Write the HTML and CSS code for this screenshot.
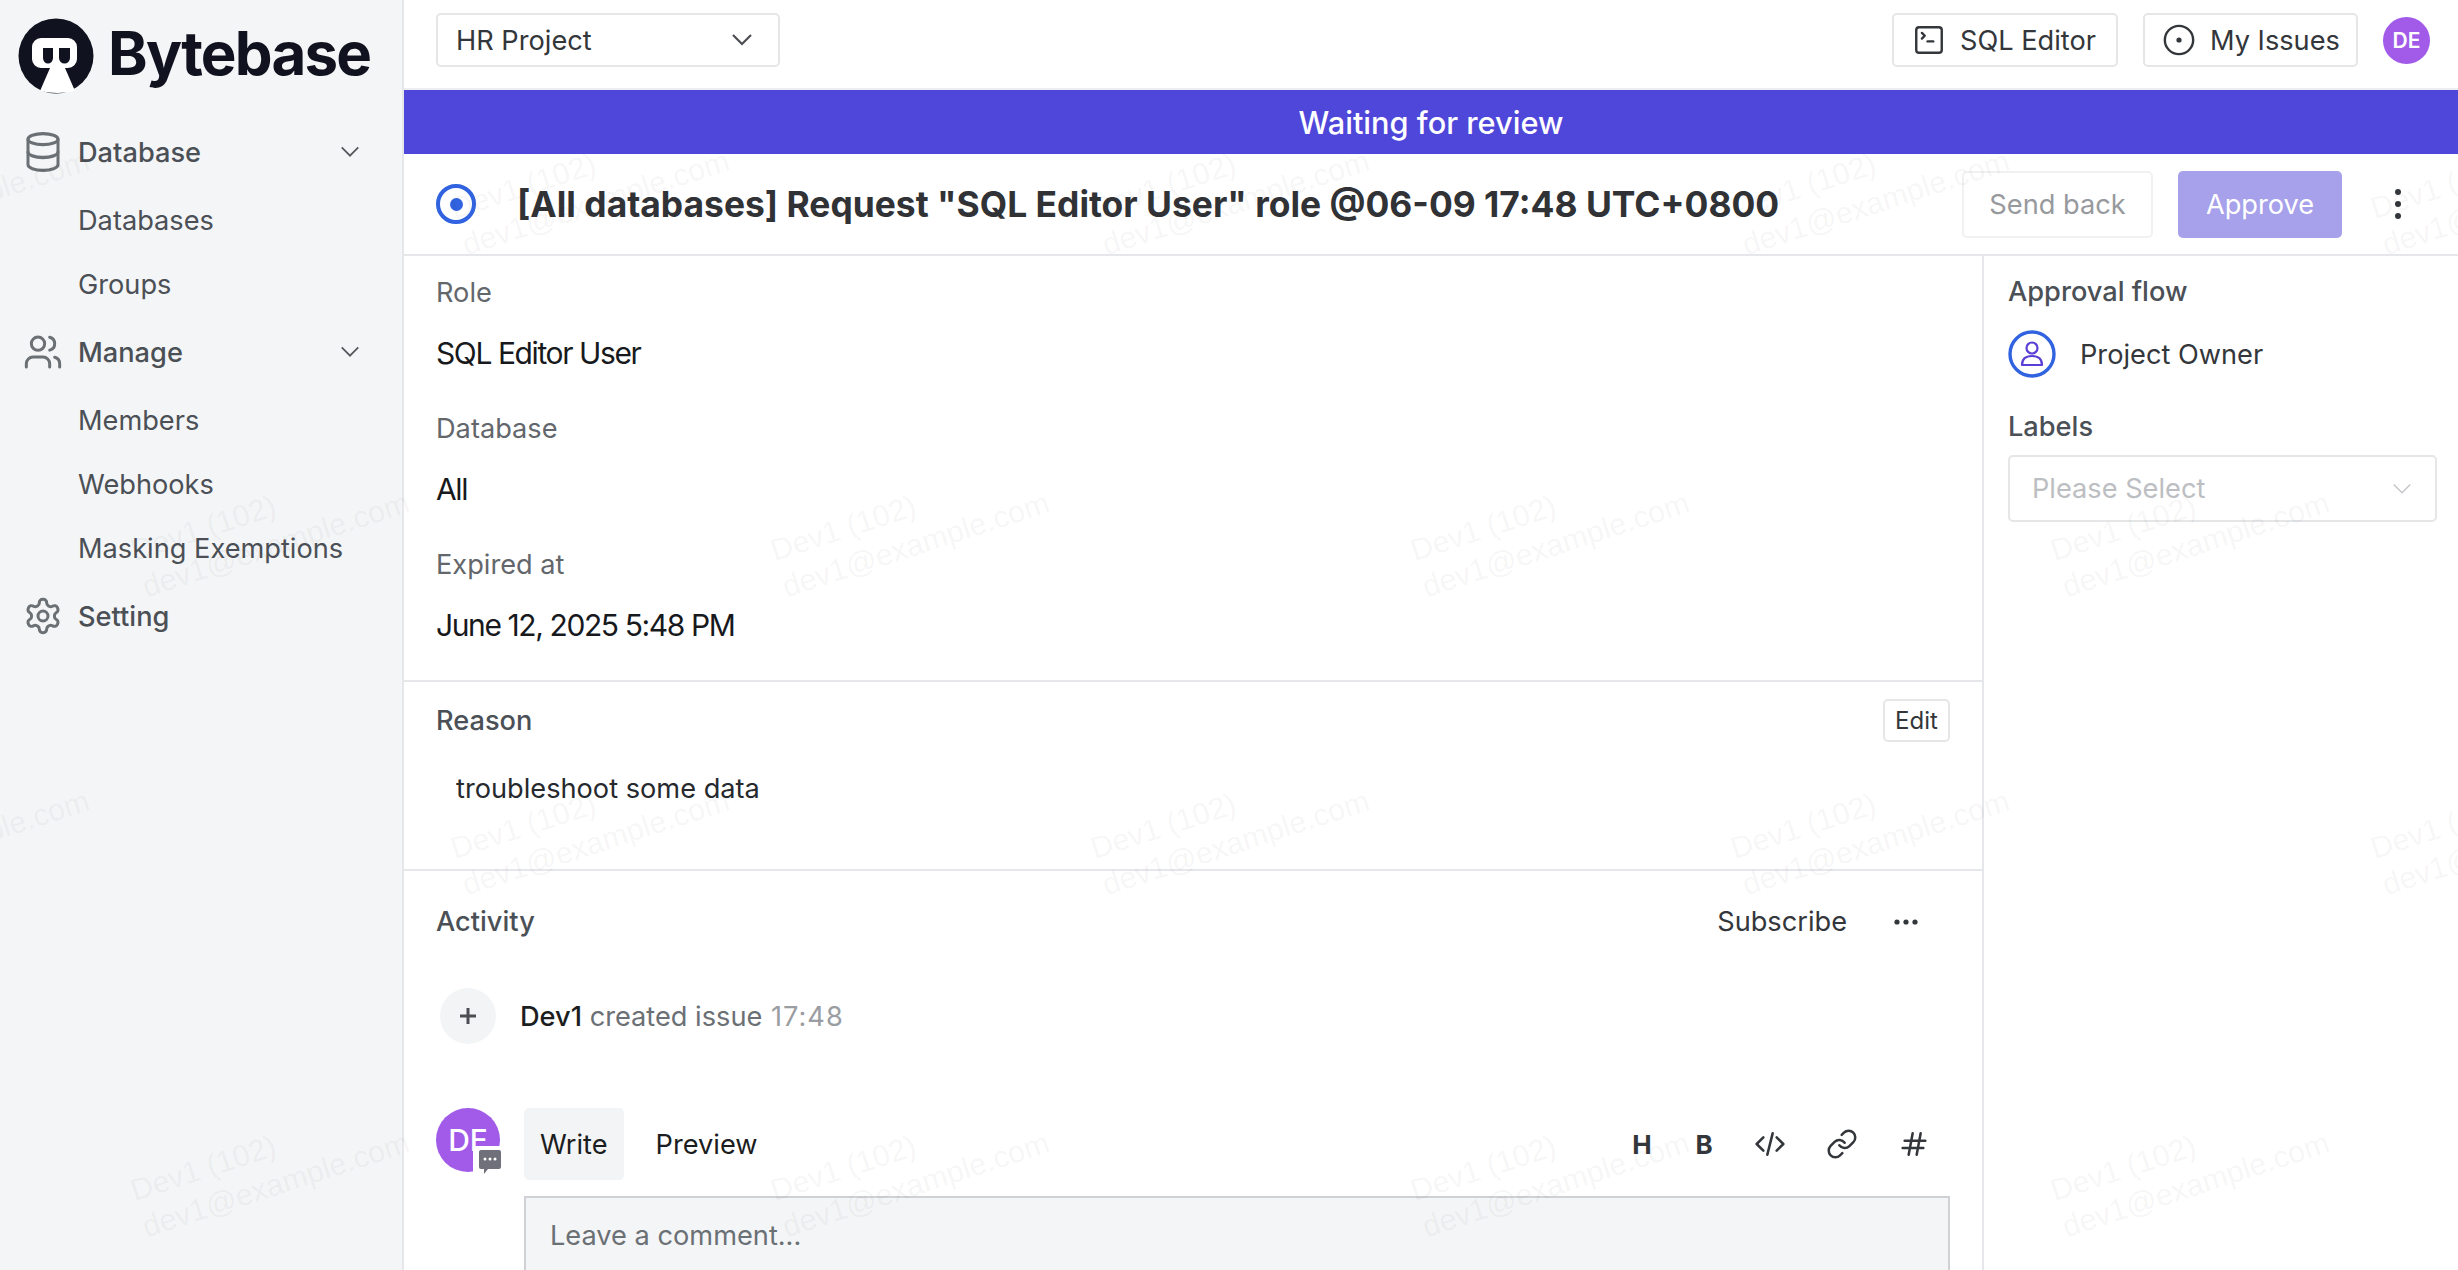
FILE: index.html
```html
<!DOCTYPE html>
<html lang="en">
<head>
<meta charset="utf-8">
<title>Bytebase</title>
<link rel="stylesheet" href="styles.css">
</head>
<body>
<div class="app">
  <aside class="side">
    <div class="brand">
      <svg class="logo" viewBox="0 0 76 76">
        <circle cx="38" cy="38" r="37.5" fill="#10131f"/>
        <path d="M23 20h27a9 9 0 0 1 9 9v12a9 9 0 0 1-9 9h-3l10 23q-18 4-35 0l10-23h-9a9 9 0 0 1-9-9V29a9 9 0 0 1 9-9z" fill="#fff"/>
        <path d="M25 30h10v10a5 5.500 0 0 1-10 0zM41 30h11v10a5.500 5.500 0 0 1-11 0z" fill="#10131f"/>
      </svg>
      <span class="brand-name">Bytebase</span>
    </div>
    <nav class="nav">
      <div class="nav-item nav-top">
        <svg class="nav-icon" viewBox="0 0 24 24" preserveAspectRatio="none"><ellipse cx="12" cy="5" rx="9" ry="3"/><path d="M3 5v14a9 3 0 0 0 18 0V5"/><path d="M3 12a9 3 0 0 0 18 0"/></svg>
        <span class="nav-label">Database</span>
        <svg class="nav-chev" viewBox="0 0 24 24"><path d="m3 7 9 9 9-9"/></svg>
      </div>
      <div class="nav-item nav-sub">Databases</div>
      <div class="nav-item nav-sub">Groups</div>
      <div class="nav-item nav-top">
        <svg class="nav-icon" viewBox="0 0 24 24"><path d="M16 21v-2a4 4 0 0 0-4-4H6a4 4 0 0 0-4 4v2"/><circle cx="9" cy="7" r="4"/><path d="M22 21v-2a4 4 0 0 0-3-3.870"/><path d="M16 3.130a4 4 0 0 1 0 7.750"/></svg>
        <span class="nav-label">Manage</span>
        <svg class="nav-chev" viewBox="0 0 24 24"><path d="m3 7 9 9 9-9"/></svg>
      </div>
      <div class="nav-item nav-sub">Members</div>
      <div class="nav-item nav-sub">Webhooks</div>
      <div class="nav-item nav-sub">Masking Exemptions</div>
      <div class="nav-item nav-top">
        <svg class="nav-icon" viewBox="0 0 24 24"><path d="M12.220 2h-.44a2 2 0 0 0-2 2v.18a2 2 0 0 1-1 1.730l-.43.25a2 2 0 0 1-2 0l-.15-.08a2 2 0 0 0-2.730.73l-.22.38a2 2 0 0 0 .73 2.730l.15.1a2 2 0 0 1 1 1.720v.51a2 2 0 0 1-1 1.740l-.15.09a2 2 0 0 0-.73 2.730l.22.38a2 2 0 0 0 2.730.73l.15-.08a2 2 0 0 1 2 0l.43.25a2 2 0 0 1 1 1.730V20a2 2 0 0 0 2 2h.44a2 2 0 0 0 2-2v-.18a2 2 0 0 1 1-1.730l.43-.25a2 2 0 0 1 2 0l.15.08a2 2 0 0 0 2.730-.73l.22-.39a2 2 0 0 0-.73-2.730l-.15-.08a2 2 0 0 1-1-1.740v-.5a2 2 0 0 1 1-1.740l.15-.09a2 2 0 0 0 .73-2.730l-.22-.38a2 2 0 0 0-2.730-.73l-.15.08a2 2 0 0 1-2 0l-.43-.25a2 2 0 0 1-1-1.730V4a2 2 0 0 0-2-2z"/><circle cx="12" cy="12" r="3"/></svg>
        <span class="nav-label">Setting</span>
      </div>
    </nav>
  </aside>

  <div class="main">
    <header class="topbar">
      <div class="project-select">
        <span>HR Project</span>
        <svg class="select-chev" viewBox="0 0 24 24"><path d="m3 7 9 9 9-9"/></svg>
      </div>
      <div class="top-actions">
        <div class="top-btn top-btn-sql">
          <svg class="top-icon" viewBox="0 0 24 24"><rect x="3" y="3" width="18" height="18" rx="2"/><path d="m7 11 2-2-2-2"/><path d="M11 13h4"/></svg>
          <span>SQL Editor</span>
        </div>
        <div class="top-btn top-btn-issues">
          <svg class="top-icon" viewBox="0 0 24 24"><circle cx="12" cy="12" r="10"/><circle cx="12" cy="12" r="1" fill="currentColor"/></svg>
          <span>My Issues</span>
        </div>
        <div class="avatar-small">DE</div>
      </div>
    </header>

    <div class="banner">Waiting for review</div>

    <div class="title-row">
      <span class="status-ring"><span class="status-dot"></span></span>
      <h1 class="issue-title">[All databases] Request "SQL Editor User" role @06-09 17:48 UTC+0800</h1>
      <div class="btn btn-back">Send back</div>
      <div class="btn btn-approve">Approve</div>
      <svg class="kebab" viewBox="0 0 10 40"><circle cx="5" cy="8" r="3"/><circle cx="5" cy="20" r="3"/><circle cx="5" cy="32" r="3"/></svg>
    </div>

    <div class="body">
      <section class="content">
        <div class="fields">
          <div class="field-label">Role</div>
          <div class="field-value">SQL Editor User</div>
          <div class="field-label">Database</div>
          <div class="field-value">All</div>
          <div class="field-label">Expired at</div>
          <div class="field-value">June 12, 2025 5:48 PM</div>
        </div>
        <div class="reason">
          <div class="section-head">
            <span class="section-title">Reason</span>
            <span class="edit-btn">Edit</span>
          </div>
          <div class="reason-text">troubleshoot some data</div>
        </div>
        <div class="activity">
          <div class="section-head activity-head">
            <span class="section-title">Activity</span>
            <div class="activity-tools">
              <span class="subscribe">Subscribe</span>
              <svg class="more" viewBox="0 0 24 6"><circle cx="3" cy="3" r="2.600"/><circle cx="12" cy="3" r="2.600"/><circle cx="21" cy="3" r="2.600"/></svg>
            </div>
          </div>
          <div class="event">
            <span class="event-icon"><svg viewBox="0 0 24 24"><path d="M12 4v16M4 12h16"/></svg></span>
            <span class="event-text"><b>Dev1</b> created issue <i>17:48</i></span>
          </div>
          <div class="composer">
            <div class="composer-avatar">
              <div class="avatar-big">DE</div>
              <span class="chat-badge"><svg viewBox="0 0 22 24"><path d="M2 0h18a2 2 0 0 1 2 2v15a2 2 0 0 1-2 2H9l-4 5v-5H2a2 2 0 0 1-2-2V2a2 2 0 0 1 2-2z" fill="#6f7079"/><circle cx="6" cy="9" r="1.500" fill="#fff"/><circle cx="11" cy="9" r="1.500" fill="#fff"/><circle cx="16" cy="9" r="1.500" fill="#fff"/></svg></span>
            </div>
            <div class="composer-main">
              <div class="composer-tabs">
                <span class="tab tab-on">Write</span>
                <span class="tab">Preview</span>
                <div class="md-tools">
                  <span class="md-glyph">H</span>
                  <span class="md-glyph">B</span>
                  <svg class="md-icon md-code" viewBox="0 0 24 24"><path d="m7 7-5 5 5 5M17 7l5 5-5 5M14 4l-4 16"/></svg>
                  <svg class="md-icon" viewBox="0 0 24 24"><path d="M10 13a5 5 0 0 0 7.540.54l3-3a5 5 0 0 0-7.070-7.070l-1.720 1.710"/><path d="M14 11a5 5 0 0 0-7.540-.54l-3 3a5 5 0 0 0 7.070 7.070l1.710-1.710"/></svg>
                  <svg class="md-icon" viewBox="0 0 24 24"><path d="M5 9.500h15.500M3.500 15h15.500M11 4 8 20M17 4l-3 16"/></svg>
                </div>
              </div>
              <div class="comment-box">Leave a comment...</div>
            </div>
          </div>
        </div>
      </section>
      <aside class="panel">
        <div class="panel-title">Approval flow</div>
        <div class="flow">
          <svg class="flow-icon" viewBox="0 0 48 48">
            <circle cx="24" cy="24" r="22" fill="none" stroke="#3163e0" stroke-width="3.400"/>
            <circle cx="24" cy="18" r="5.500" fill="none" stroke="#5b3fd6" stroke-width="2.200"/>
            <path d="M14 35c0-6 4-9 10-9s10 3 10 9z" fill="none" stroke="#5b3fd6" stroke-width="2.200" stroke-linejoin="round"/>
          </svg>
          <span>Project Owner</span>
        </div>
        <div class="panel-title panel-title-labels">Labels</div>
        <div class="labels-select">
          <span>Please Select</span>
          <svg class="labels-chev" viewBox="0 0 24 24"><path d="m3 7 9 9 9-9"/></svg>
        </div>
      </aside>
    </div>
  </div>
</div>

<div class="marks" aria-hidden="true">
  <div class="mark-row mark-row-a">
    <div class="mark"><div class="mark-text">Dev1 (102)<br>dev1@example.com</div></div>
    <div class="mark"><div class="mark-text">Dev1 (102)<br>dev1@example.com</div></div>
    <div class="mark"><div class="mark-text">Dev1 (102)<br>dev1@example.com</div></div>
    <div class="mark"><div class="mark-text">Dev1 (102)<br>dev1@example.com</div></div>
    <div class="mark"><div class="mark-text">Dev1 (102)<br>dev1@example.com</div></div>
  </div>
  <div class="mark-row mark-row-b">
    <div class="mark"><div class="mark-text">Dev1 (102)<br>dev1@example.com</div></div>
    <div class="mark"><div class="mark-text">Dev1 (102)<br>dev1@example.com</div></div>
    <div class="mark"><div class="mark-text">Dev1 (102)<br>dev1@example.com</div></div>
    <div class="mark"><div class="mark-text">Dev1 (102)<br>dev1@example.com</div></div>
  </div>
  <div class="mark-row mark-row-a">
    <div class="mark"><div class="mark-text">Dev1 (102)<br>dev1@example.com</div></div>
    <div class="mark"><div class="mark-text">Dev1 (102)<br>dev1@example.com</div></div>
    <div class="mark"><div class="mark-text">Dev1 (102)<br>dev1@example.com</div></div>
    <div class="mark"><div class="mark-text">Dev1 (102)<br>dev1@example.com</div></div>
    <div class="mark"><div class="mark-text">Dev1 (102)<br>dev1@example.com</div></div>
  </div>
  <div class="mark-row mark-row-b">
    <div class="mark"><div class="mark-text">Dev1 (102)<br>dev1@example.com</div></div>
    <div class="mark"><div class="mark-text">Dev1 (102)<br>dev1@example.com</div></div>
    <div class="mark"><div class="mark-text">Dev1 (102)<br>dev1@example.com</div></div>
    <div class="mark"><div class="mark-text">Dev1 (102)<br>dev1@example.com</div></div>
  </div>
</div>
</body>
</html>
```
FILE: styles.css
```css
* { box-sizing: border-box; }
html, body { margin: 0; height: 100%; overflow: hidden; }
body { font-family: Inter, "Liberation Sans", sans-serif; font-size: 27.2px; color: #1f2328; background: #fff; position: relative; }

svg { display: block; flex: none; }

.app { display: flex; height: 100vh; }

/* sidebar */
.side { width: 404px; flex: none; background: #f4f5f7; border-right: 2px solid #e5e7eb; }
.brand { height: 120px; display: flex; align-items: flex-start; padding: 18px 0 0 18px; gap: 14px; }
.logo { width: 76px; height: 76px; }
.brand-name { font-size: 60px; font-weight: 700; letter-spacing: -1.800px; line-height: 70px; color: #10131f; }
.nav { display: flex; flex-direction: column; }
.nav-item { height: 64px; display: flex; align-items: center; color: #4b5056; }
.nav-top { font-weight: 500; padding-left: 23px; margin: 4px 0; }
.nav-top:first-child { margin-top: 0; }
.nav-sub { padding-left: 78px; }
.nav-icon { width: 40px; height: 44px; fill: none; stroke: #6b7075; stroke-width: 1.8; stroke-linecap: round; stroke-linejoin: round; margin-right: 15px; }
.nav-label { flex: 1; }
.nav-chev { width: 22px; height: 22px; fill: none; stroke: #55595f; stroke-width: 2; margin-right: 41px; }

/* top bar */
.main { flex: 1; min-width: 0; display: flex; flex-direction: column; }
.topbar { height: 90px; display: flex; align-items: center; justify-content: space-between; padding: 0 28px 8px 32px; border-bottom: 2px solid #eceef1; }
.project-select { width: 344px; height: 54px; border: 2px solid #e5e6e8; border-radius: 5px; display: flex; align-items: center; justify-content: space-between; padding: 0 24px 0 18px; color: #33363a; }
.select-chev { width: 24px; height: 24px; fill: none; stroke: #4b4e53; stroke-width: 2.200; }
.top-actions { display: flex; align-items: center; gap: 25px; }
.top-btn { height: 54px; border: 2px solid #e5e6e8; border-radius: 5px; display: flex; align-items: center; padding: 0 0 0 18px; gap: 14px; color: #33363a; white-space: nowrap; }
.top-btn-sql { width: 226px; }
.top-btn-issues { width: 215px; padding-left: 17px; }
.top-icon { width: 34px; height: 34px; fill: none; stroke: #33363a; stroke-width: 1.700; stroke-linecap: round; stroke-linejoin: round; }
.avatar-small { width: 47px; height: 47px; border-radius: 50%; background: #a15be8; color: #fff; font-size: 21px; font-weight: 600; display: flex; align-items: center; justify-content: center; }

/* banner */
.banner { height: 64px; background: #4f46da; color: #fff; font-size: 30.720px; font-weight: 500; display: flex; align-items: center; justify-content: center; }

/* title */
.title-row { height: 102px; display: flex; align-items: center; padding: 0 0 0 32px; border-bottom: 2px solid #e5e7eb; }
.status-ring { width: 40px; height: 40px; border: 4px solid #3163e0; border-radius: 50%; display: flex; align-items: center; justify-content: center; flex: none; margin-right: 41px; }
.status-dot { width: 13px; height: 13px; border-radius: 50%; background: #3163e0; }
.issue-title { margin: 0; flex: 1; font-size: 35.400px; font-weight: 700; color: #303236; white-space: nowrap; }
.btn { height: 67px; border-radius: 5px; display: flex; align-items: center; justify-content: center; flex: none; }
.btn-back { width: 191px; border: 2px solid #f0f1f3; color: #97999d; margin-right: 25px; }
.btn-approve { width: 164px; background: #a6a1ea; color: #fff; margin-right: 51px; }
.kebab { width: 10px; height: 40px; fill: #33363a; margin-right: 55px; }

/* body */
.body { flex: 1; min-height: 0; display: flex; }
.content { width: 1580px; flex: none; border-right: 2px solid #e5e7eb; }
.fields { height: 426px; padding: 12px 0 0 32px; border-bottom: 2px solid #e5e7eb; }
.field-label { height: 50px; line-height: 50px; color: #63676c; }
.field-value { height: 86px; padding-top: 10px; line-height: 50px; font-size: 30px; color: #17191c; letter-spacing: -1.400px; }
.reason { height: 189px; border-bottom: 2px solid #e5e7eb; }
.section-head { display: flex; align-items: center; justify-content: space-between; padding: 17px 32px 0 32px; }
.section-title { font-weight: 500; color: #4b5056; }
.edit-btn { width: 67px; height: 43px; border: 2px solid #e5e6e8; border-radius: 5px; display: flex; align-items: center; justify-content: center; font-size: 24px; color: #33363a; }
.reason-text { padding: 27px 0 0 52px; line-height: 40px; color: #26292d; }
.activity-head { padding: 34px 64px 0 32px; }
.activity-tools { display: flex; align-items: center; gap: 47px; }
.subscribe { color: #33363a; }
.more { width: 24px; height: 6px; fill: #33363a; }
.event { display: flex; align-items: center; padding: 50px 0 0 36px; }
.event-icon { width: 56px; height: 56px; border-radius: 50%; background: #f3f4f6; display: flex; align-items: center; justify-content: center; margin-right: 24px; }
.event-icon svg { width: 24px; height: 24px; fill: none; stroke: #4b4e53; stroke-width: 3; }
.event-text { color: #6b7075; }
.event-text b { font-weight: 500; color: #1b1d20; }
.event-text i { font-style: normal; color: #9a9da1; letter-spacing: 1px; margin-left: 1px; }
.composer { display: flex; padding: 64px 32px 0 32px; }
.composer-avatar { position: relative; width: 88px; flex: none; }
.avatar-big { width: 64px; height: 64px; border-radius: 50%; background: #a15be8; color: #fff; font-size: 30px; font-weight: 500; display: flex; align-items: center; justify-content: center; }
.chat-badge { position: absolute; left: 37px; top: 38px; width: 28px; height: 28px; padding: 4px 0 0 6px; background: #fff; }
.chat-badge svg { width: 22px; height: 24px; }
.composer-main { flex: 1; min-width: 0; }
.composer-tabs { height: 72px; display: flex; align-items: center; }
.tab { height: 72px; padding: 0 16px; display: flex; align-items: center; color: #1b1d20; border-radius: 5px; margin-right: 16px; }
.tab-on { background: #f3f4f6; }
.md-tools { margin-left: auto; display: flex; align-items: center; padding: 0 20px 0 0; }
.md-glyph { width: 62px; text-align: center; font-size: 26px; font-weight: 700; color: #33363a; }
.md-icon { width: 32px; height: 32px; fill: none; stroke: #33363a; stroke-width: 1.900; stroke-linecap: round; stroke-linejoin: round; margin-left: 40px; }
.md-code { margin-left: 19px; }
.comment-box { margin-top: 16px; height: 74px; border: 2px solid #cfd1d4; border-bottom: 0; background: #f3f5f7; padding: 20px 24px 0; line-height: 36px; color: #6b7075; }

/* right panel */
.panel { flex: 1; min-width: 0; padding: 11px 21px 0 24px; }
.panel-title { height: 50px; line-height: 50px; font-weight: 500; color: #4b5056; }
.flow { display: flex; align-items: center; gap: 24px; height: 48px; margin-top: 13px; color: #33363a; }
.flow-icon { width: 48px; height: 48px; }
.panel-title-labels { margin-top: 24px; }
.labels-select { height: 67px; margin-top: 3px; border: 2px solid #e5e6e8; border-radius: 5px; display: flex; align-items: center; justify-content: space-between; padding: 0 22px; color: #bcbec2; }
.labels-chev { width: 22px; height: 22px; fill: none; stroke: #c4c6ca; stroke-width: 1.600; }

/* watermark layer */
.marks { position: absolute; inset: 0; overflow: hidden; pointer-events: none; }
.mark-row { display: flex; height: 320px; }
.mark-row-a { margin-left: -171px; padding-top: 225px; }
.mark-row-b { margin-left: 149px; padding-top: 247px; }
.mark { width: 640px; height: 0; flex: none; }
.mark-text { width: 400px; font-family: "Liberation Sans", sans-serif; font-size: 30.500px; line-height: 38px; color: rgba(0, 0, 0, 0.055); transform: rotate(-18deg); transform-origin: 0 100%; margin-top: -38px; white-space: nowrap; }
```
